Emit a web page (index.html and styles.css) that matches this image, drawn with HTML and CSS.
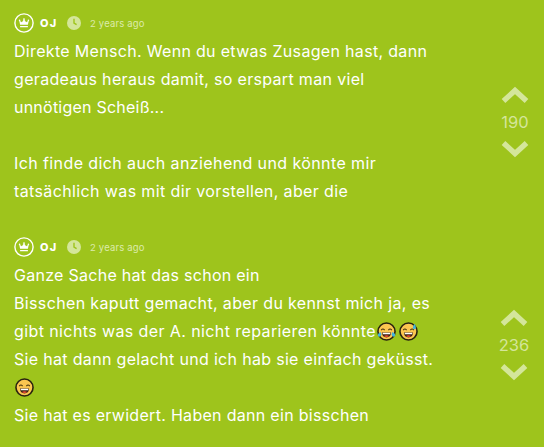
FILE: index.html
```html
<!DOCTYPE html>
<html lang="de">
<head>
<meta charset="utf-8">
<title>Thread</title>
<link rel="stylesheet" href="styles.css">
</head>
<body>
<svg class="defs" aria-hidden="true">
  <symbol id="crown" viewBox="0 0 20 20"><circle cx="10" cy="10" r="9.1" fill="none" stroke="currentColor" stroke-width="1.4"/><circle cx="5.6" cy="7.4" r=".8"/><circle cx="10" cy="6.1" r=".9"/><circle cx="14.4" cy="7.4" r=".8"/><path d="M5.2 7.5 7.9 9.2 10 6.3l2.1 2.9 2.7-1.7-.9 4.3H6.1zM6.1 13h7.8v1.3H6.1z"/></symbol>
  <symbol id="clock" viewBox="0 0 14 14"><circle cx="7" cy="7" r="7" fill="#d4e69a"/><path d="M7 2.8V7l2.6 1.7" fill="none" stroke="#9ec41c" stroke-width="1.4"/></symbol>
  <symbol id="up" viewBox="0 0 28 18"><path d="m2.5 15 11.5-10.5L25.5 15" fill="none" stroke="currentColor" stroke-width="5.4"/></symbol>
  <symbol id="down" viewBox="0 0 28 18"><path d="M2.5 3 14 13.5 25.5 3" fill="none" stroke="currentColor" stroke-width="5.4"/></symbol>
  <symbol id="grin" viewBox="0 0 18 18"><circle cx="9" cy="9" r="8.1" fill="#fbc650" stroke="#29220f" stroke-width="1.5"/><path d="M4 7.7q1.6-2.3 3.2 0M10.8 7.7q1.6-2.3 3.2 0" fill="none" stroke="#49350f"/><path d="M4.6 10h8.8q-.5 4.6-4.4 4.6T4.6 10z" fill="#3b2112"/><path d="M5.4 10.2h7.2v1.4H5.4z" fill="#fff"/><path d="M6.5 13.3q2.5-1.5 5 0-2.5 1.8-5 0z" fill="#ef4a35"/></symbol>
</svg>
<main class="thread">
  <article class="post">
    <div class="body">
      <header class="meta"><svg class="crown"><use href="#crown"/></svg><b class="author">OJ</b><svg class="clock"><use href="#clock"/></svg><span class="time">2 years ago</span></header>
      <p class="text"><span class="l1">Direkte Mensch. Wenn du etwas Zusagen hast, dann</span><br><span class="l2">geradeaus heraus damit, so erspart man viel</span><br><span class="l3">unnötigen Scheiß...</span><br><br><span class="l4">Ich finde dich auch anziehend und könnte mir</span><br><span class="l5">tatsächlich was mit dir vorstellen, aber die</span></p>
    </div>
    <aside class="votes"><svg class="arrow"><use href="#up"/></svg><span class="count">190</span><svg class="arrow"><use href="#down"/></svg></aside>
  </article>
  <article class="post">
    <div class="body">
      <header class="meta"><svg class="crown"><use href="#crown"/></svg><b class="author">OJ</b><svg class="clock"><use href="#clock"/></svg><span class="time">2 years ago</span></header>
      <p class="text"><span class="l6">Ganze Sache hat das schon ein</span><br><span class="l7">Bisschen kaputt gemacht, aber du kennst mich ja, es</span><br><span class="l8">gibt nichts was der A. nicht reparieren könnte</span><svg class="emoji" viewBox="0 0 18 18"><use href="#grin"/><path d="M3.4 9.4Q-.2 11 1.1 13.5q2.5 1.4 3.1-1.8zM14.6 9.4q3.6 1.6 2.3 4.1-2.5 1.4-3.1-1.8z" fill="#42b4dc"/></svg><svg class="emoji second" viewBox="0 0 18 18"><use href="#grin"/><path d="M14.9 1.7q-3.3 4.4-.6 5.2 3.1.2.6-5.2z" fill="#42b4dc"/></svg><br><span class="l9">Sie hat dann gelacht und ich hab sie einfach geküsst.</span><br><svg class="emoji" viewBox="0 0 18 18"><use href="#grin"/></svg><br><span class="l10">Sie hat es erwidert. Haben dann ein bisschen</span></p>
    </div>
    <aside class="votes second-votes"><svg class="arrow"><use href="#up"/></svg><span class="count">236</span><svg class="arrow"><use href="#down"/></svg></aside>
  </article>
</main>
</body>
</html>
```
FILE: styles.css
```css
* { box-sizing: border-box; }
body { margin: 0; background: #9ec41c; color: #fff; font-family: Inter, "Noto Sans", sans-serif; }
.defs { position: absolute; width: 0; height: 0; }
.thread { height: 447px; overflow: hidden; padding-top: 13px; }
.post { display: flex; height: 224px; padding-left: 14px; }
.body { width: 471px; flex-shrink: 0; }
.meta { display: flex; align-items: center; height: 20px; }
.crown { width: 20px; height: 20px; fill: currentColor; }
.author { width: 20px; margin-left: 6px; font-size: 11px; font-weight: 800; letter-spacing: 1.2px; }
.clock { width: 14px; height: 14px; margin-left: 7px; }
.time { margin-left: 9px; font-size: 9.5px; letter-spacing: .17px; color: #dcebab; }
.text { margin: 4px 0 0; font-size: 16px; line-height: 28px; white-space: nowrap; }
.l1, .l9 { letter-spacing: .32px; }
.l2 { letter-spacing: .33px; }
.l3 { letter-spacing: .23px; }
.l4, .l8 { letter-spacing: .4px; }
.l5 { letter-spacing: .38px; }
.l6 { letter-spacing: .28px; }
.l7 { letter-spacing: .36px; }
.l10 { letter-spacing: .3px; }
.emoji { width: 19px; height: 19px; vertical-align: -4px; margin-left: 1px; overflow: visible; }
.second { margin-left: 3px; }
.votes { display: flex; flex-direction: column; align-items: center; width: 60px; flex-shrink: 0; padding-top: 73px; color: #d4e69a; }
.second-votes { width: 58px; padding-top: 72px; }
.arrow { width: 28px; height: 18px; }
.count { height: 36px; line-height: 36px; font-size: 16.5px; }
```
